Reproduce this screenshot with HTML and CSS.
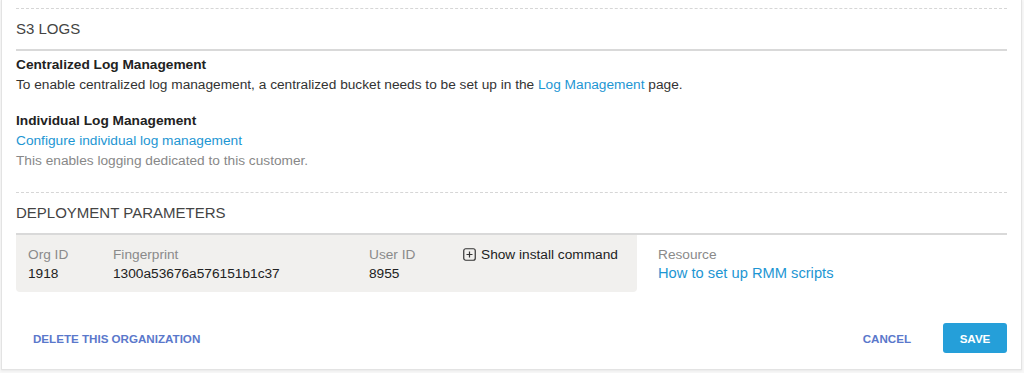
FILE: index.html
```html
<!DOCTYPE html>
<html lang="en">
<head>
  <meta charset="UTF-8" />
  <meta name="viewport" content="width=device-width, initial-scale=1.0">
  <title>Organization settings</title>
  <link rel="stylesheet" href="styles.css">
</head>
<body>
  <div class="card">
    <div class="section">
      <h3 class="section-title">S3 LOGS</h3>

      <div class="block">
        <div class="block-title">Centralized Log Management</div>
        <p>To enable centralized log management, a centralized bucket needs to be set up in the <a href="#">Log Management</a> page.</p>
      </div>

      <div class="block">
        <div class="block-title">Individual Log Management</div>
        <a class="block-link" href="#">Configure individual log management</a>
        <p class="muted">This enables logging dedicated to this customer.</p>
      </div>
    </div>

    <div class="section section-last">
      <h3 class="section-title">DEPLOYMENT PARAMETERS</h3>

      <div class="params">
        <div class="param-box">
          <div class="param">
            <span class="label">Org ID</span>
            <span class="value">1918</span>
          </div>
          <div class="param">
            <span class="label">Fingerprint</span>
            <span class="value">1300a53676a576151b1c37</span>
          </div>
          <div class="param">
            <span class="label">User ID</span>
            <span class="value">8955</span>
          </div>
          <div class="param">
            <span class="toggle">
              <svg width="13" height="13" viewBox="0 0 13 13">
                <rect x="0.75" y="0.75" width="11.5" height="11.5" rx="2" fill="none" stroke="#333" stroke-width="1.2"/>
                <path d="M6.5 3.5v6M3.5 6.5h6" stroke="#333" stroke-width="1.2"/>
              </svg>
              Show install command
            </span>
          </div>
        </div>
        <div class="param resource">
          <span class="label">Resource</span>
          <a href="#">How to set up RMM scripts</a>
        </div>
      </div>
    </div>

    <div class="footer">
      <button class="btn-link">DELETE THIS ORGANIZATION</button>
      <div class="actions">
        <button class="btn-link">CANCEL</button>
        <button class="btn-primary">SAVE</button>
      </div>
    </div>
  </div>
</body>
</html>
```

FILE: styles.css
```css
body {
  margin: 0;
  background: #f7f7f7;
  font-family: 'Liberation Sans', Arial, sans-serif;
  font-size: 13.7px;
  color: #333;
}
a {
  color: #1d96d3;
  text-decoration: none;
}
p {
  margin: 0;
}
.card {
  margin: 0 2px 4px 1px;
  padding: 8px 14px 16px 14px;
  background: #fff;
  border: 1px solid #e3e3e3;
  border-top: none;
  box-shadow: 0 1px 2px rgba(0, 0, 0, 0.06);
}
.section {
  border-top: 1px dashed #d6d6d6;
  padding-bottom: 21px;
}
.section-last {
  padding-bottom: 0;
}
.section-title {
  margin: 0;
  padding: 10px 0;
  line-height: 20px;
  font-size: 15px;
  font-weight: normal;
  color: #444;
  border-bottom: 2px solid #d9d9d9;
}
.block {
  line-height: 20px;
  margin-top: 16px;
}
.section-title + .block {
  margin-top: 4px;
}
.block-title {
  font-weight: bold;
  color: #222;
}
.block-link {
  display: block;
}
.muted {
  color: #888;
}
.params {
  display: flex;
  gap: 21px;
}
.param-box {
  display: grid;
  grid-template-columns: 85px 256px 94px auto;
  width: 621px;
  box-sizing: border-box;
  padding: 10px 12px 9px;
  background: #f1f0ee;
  border-radius: 0 0 4px 4px;
}
.param {
  display: flex;
  flex-direction: column;
  line-height: 19px;
}
.label {
  color: #8a8a8a;
}
.value {
  color: #222;
}
.toggle {
  display: flex;
  align-items: center;
  gap: 5px;
  color: #222;
  cursor: pointer;
}
.resource {
  padding-top: 10px;
}
.resource a {
  font-size: 14.7px;
}
.footer {
  display: flex;
  justify-content: space-between;
  align-items: center;
  margin-top: 31px;
}
.actions {
  display: flex;
  align-items: center;
  gap: 15px;
}
button {
  font-family: 'Liberation Sans', Arial, sans-serif;
  font-size: 11.6px;
  font-weight: bold;
  cursor: pointer;
  border: none;
}
.btn-link {
  background: none;
  color: #5a78cb;
  padding: 8px 17px;
}
.btn-primary {
  background: #259fd9;
  color: #fff;
  height: 30px;
  width: 64px;
  border-radius: 3px;
}
```
